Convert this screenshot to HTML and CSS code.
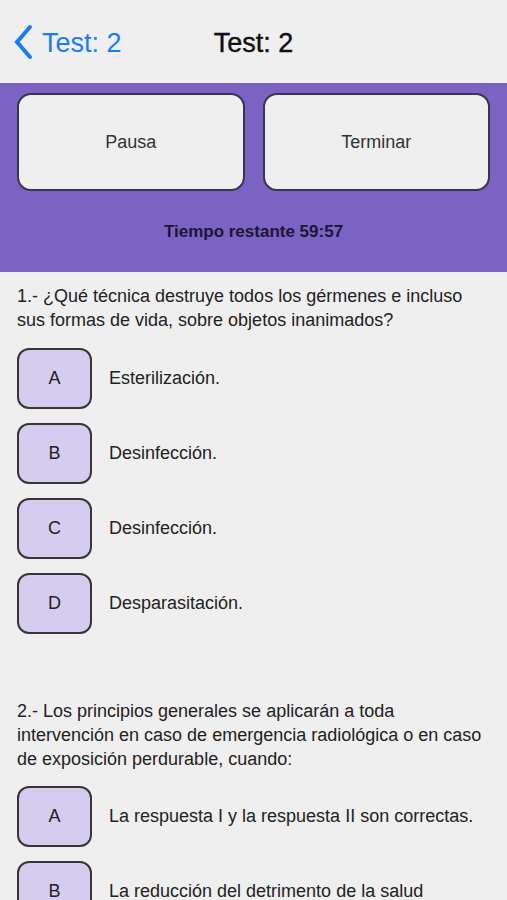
FILE: index.html
```html
<!DOCTYPE html>
<html lang="es">
<head>
    <meta charset="UTF-8">
    <meta name="viewport" content="width=device-width, initial-scale=1.0">
    <title>Test: 2</title>
    <link rel="stylesheet" href="styles.css">
</head>
<body>
    <div class="nav">
        <a class="back" href="#">
            <svg class="chevron" width="20" height="36" viewBox="0 0 20 36">
                <path d="M17 3 L4 18 L17 33" fill="none" stroke="#1a7cf5" stroke-width="4" stroke-linecap="round" stroke-linejoin="miter"/>
            </svg>
            <span>Test: 2</span>
        </a>
        <h1 class="title">Test: 2</h1>
        <div></div>
    </div>

    <div class="controls">
        <div class="buttons">
            <button class="ctrl">Pausa</button>
            <button class="ctrl">Terminar</button>
        </div>
        <div class="timer">Tiempo restante 59:57</div>
    </div>

    <div class="content">
        <div class="question">
            <p class="q-text">1.- ¿Qué técnica destruye todos los gérmenes e incluso sus formas de vida, sobre objetos inanimados?</p>
            <div class="option"><button class="letter">A</button><span>Esterilización.</span></div>
            <div class="option"><button class="letter">B</button><span>Desinfección.</span></div>
            <div class="option"><button class="letter">C</button><span>Desinfección.</span></div>
            <div class="option"><button class="letter">D</button><span>Desparasitación.</span></div>
        </div>
        <div class="question">
            <p class="q-text">2.- Los principios generales se aplicarán a toda intervención en caso de emergencia radiológica o en caso de exposición perdurable, cuando:</p>
            <div class="option"><button class="letter">A</button><span>La respuesta I y la respuesta II son correctas.</span></div>
            <div class="option"><button class="letter">B</button><span>La reducción del detrimento de la salud</span></div>
        </div>
    </div>
</body>
</html>
```

FILE: styles.css
```css
body {
    margin: 0;
    font-family: "Liberation Sans", Arial, sans-serif;
    background-color: #efefef;
    color: #222;
    overflow: hidden;
}
.nav {
    height: 79px;
    padding-top: 4px;
    display: grid;
    grid-template-columns: 1fr auto 1fr;
    align-items: center;
}
.back {
    display: flex;
    align-items: center;
    gap: 9px;
    padding-left: 13px;
    color: #1a7cf5;
    text-decoration: none;
    font-size: 27px;
}
.chevron {
    margin-top: -4px;
}
.title {
    margin: 0;
    font-size: 27px;
    font-weight: normal;
    color: #111;
    -webkit-text-stroke: 0.4px #111;
}
.controls {
    background-color: #7b62c3;
    padding: 10px 17px 0;
    height: 179px;
}
.buttons {
    display: grid;
    grid-template-columns: 1fr 1fr;
    gap: 18px;
}
.ctrl {
    height: 98px;
    background: #efefef;
    border: 2px solid #3a3450;
    border-radius: 14px;
    font-family: inherit;
    font-size: 18px;
    color: #333;
}
.timer {
    text-align: center;
    margin-top: 31px;
    font-size: 17px;
    font-weight: bold;
    color: #1c1533;
}
.content {
    padding: 0 17px;
}
.q-text {
    margin: 12px 0 16px;
    font-size: 18px;
    line-height: 24px;
    color: #222;
}
.question + .question .q-text {
    margin-top: 65px;
    margin-bottom: 15px;
}
.option {
    display: flex;
    align-items: center;
    gap: 17px;
    margin-bottom: 14px;
    font-size: 18px;
    color: #222;
}
.letter {
    width: 75px;
    height: 61px;
    background: #d6ccef;
    border: 2px solid #363636;
    border-radius: 12px;
    font-family: inherit;
    font-size: 18px;
    color: #222;
}
```
